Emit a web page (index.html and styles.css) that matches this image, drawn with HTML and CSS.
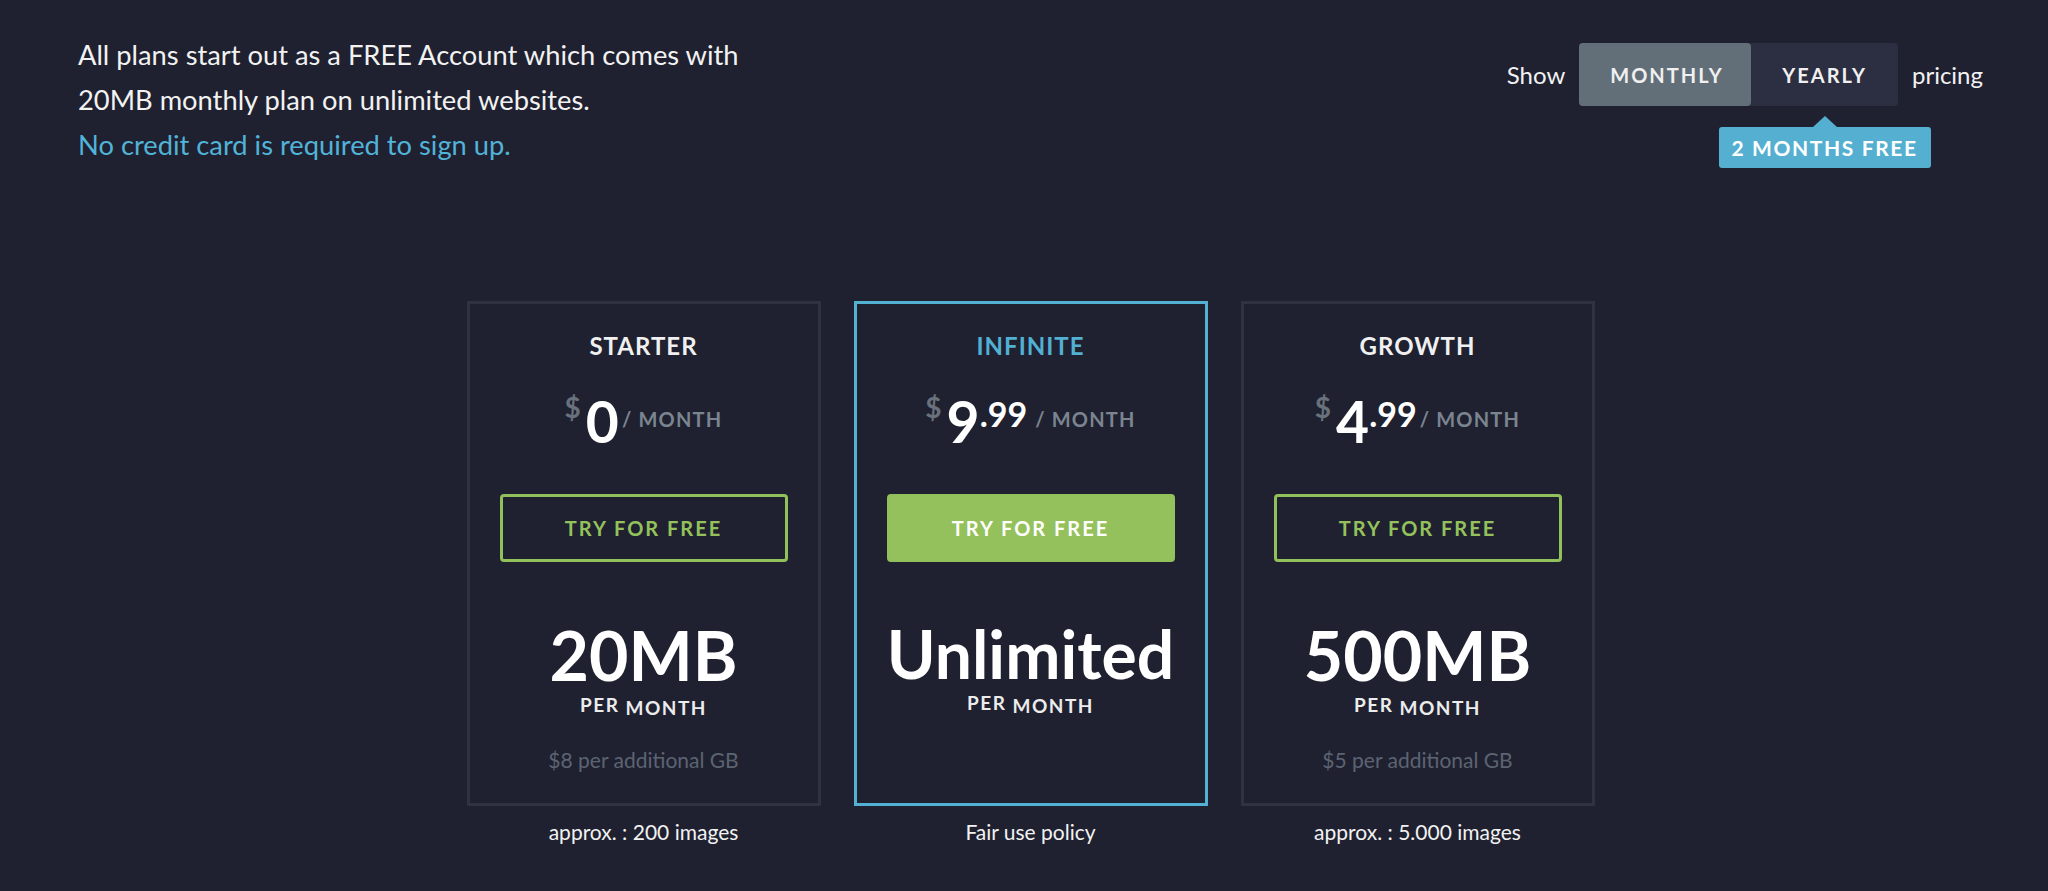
FILE: index.html
```html
<!DOCTYPE html>
<html lang="en">
<head>
  <meta charset="UTF-8">
  <title>Pricing</title>
  <link rel="stylesheet" href="styles.css">
</head>
<body>
  <header class="top">
    <div class="intro">
      <p>All plans start out as a FREE Account which comes with<br>20MB monthly plan on unlimited websites.</p>
      <p class="note">No credit card is required to sign up.</p>
    </div>
    <div class="period">
      <span>Show</span>
      <div class="toggle">
        <button class="opt active">MONTHLY</button>
        <button class="opt">YEARLY<span class="badge">2 MONTHS FREE</span></button>
      </div>
      <span>pricing</span>
    </div>
  </header>

  <section class="plans">
    <div class="plan">
      <div class="card">
        <h3 class="name">STARTER</h3>
        <div class="price"><span class="cur">$</span><span class="int">0</span><span class="per tight">/ MONTH</span></div>
        <a class="try">TRY FOR FREE</a>
        <div class="amount">20MB</div>
        <div class="permonth"><span class="p">PER</span> MONTH</div>
        <div class="extra">$8 per additional GB</div>
      </div>
      <div class="foot">approx. : 200 images</div>
    </div>

    <div class="plan">
      <div class="card featured">
        <h3 class="name">INFINITE</h3>
        <div class="price"><span class="cur">$</span><span class="int">9</span><span class="cents">.99</span><span class="per">/ MONTH</span></div>
        <a class="try">TRY FOR FREE</a>
        <div class="amount">Unlimited</div>
        <div class="permonth"><span class="p">PER</span> MONTH</div>
      </div>
      <div class="foot">Fair use policy</div>
    </div>

    <div class="plan">
      <div class="card">
        <h3 class="name">GROWTH</h3>
        <div class="price"><span class="cur">$</span><span class="int">4</span><span class="cents">.99</span><span class="per tight">/ MONTH</span></div>
        <a class="try">TRY FOR FREE</a>
        <div class="amount">500MB</div>
        <div class="permonth"><span class="p">PER</span> MONTH</div>
        <div class="extra">$5 per additional GB</div>
      </div>
      <div class="foot">approx. : 5.000 images</div>
    </div>
  </section>
</body>
</html>
```

FILE: styles.css
```css
body {
  margin: 0;
  background: #1f2130;
  color: #f2f2f2;
  font-family: Lato, "Liberation Sans", sans-serif;
}
.top {
  display: flex;
  justify-content: space-between;
  align-items: flex-start;
  padding: 32px 65px 0 78px;
}
.intro p {
  margin: 0;
  font-size: 27.3px;
  line-height: 45px;
}
.intro .note {
  color: #52b3d9;
}
.period {
  display: flex;
  align-items: center;
  gap: 14px;
  margin-top: 11px;
  font-size: 24px;
}
.toggle {
  display: flex;
  background: #2c2e41;
  border-radius: 4px;
}
.opt {
  position: relative;
  height: 63px;
  padding: 0 31px;
  border: none;
  border-radius: 4px;
  background: transparent;
  color: #f0f0f0;
  font-family: Lato, sans-serif;
  font-weight: 700;
  font-size: 20px;
  letter-spacing: 2px;
}
.opt.active {
  width: 172px;
  background: #636f78;
}
.badge {
  position: absolute;
  top: 84px;
  left: 50%;
  transform: translateX(-50%);
  padding: 8px 13px;
  background: #55afd0;
  border-radius: 3px;
  white-space: nowrap;
  font-size: 21px;
  letter-spacing: 1.6px;
  color: #fff;
}
.badge::before {
  content: "";
  position: absolute;
  top: -11px;
  left: 50%;
  margin-left: -12px;
  border: 12px solid transparent;
  border-top: 0;
  border-bottom: 11px solid #55afd0;
}
.plans {
  display: flex;
  justify-content: center;
  gap: 33px;
  margin-top: 134px;
  padding-left: 13px;
}
.plan {
  width: 354px;
}
.card {
  display: flex;
  flex-direction: column;
  align-items: center;
  box-sizing: border-box;
  height: 505px;
  padding: 27px 30px 0;
  border: 3px solid #2f3243;
}
.card.featured {
  border-color: #52b0d3;
}
.name {
  margin: 0;
  font-size: 24px;
  line-height: 30px;
  font-weight: 700;
  letter-spacing: 1px;
  color: #f0f0f0;
}
.featured .name {
  color: #52b0d3;
}
.price {
  display: flex;
  align-items: flex-start;
  margin-top: 32px;
  line-height: 1;
  font-weight: 700;
}
.cur {
  margin-top: 0;
  margin-right: 5px;
  font-size: 28px;
  color: #68717c;
}
.int {
  font-size: 57px;
  color: #fff;
}
.cents {
  margin-top: 4px;
  font-size: 34px;
  color: #fff;
}
.per {
  margin-top: 16px;
  margin-left: 8px;
  font-size: 20px;
  letter-spacing: 1.2px;
  color: #7b8590;
}
.per.tight {
  margin-left: 3px;
}
.try {
  display: flex;
  align-items: center;
  justify-content: center;
  box-sizing: border-box;
  width: 100%;
  height: 68px;
  margin-top: 44px;
  border: 3px solid #92c05a;
  border-radius: 4px;
  font-size: 20px;
  font-weight: 700;
  letter-spacing: 2px;
  color: #94c15b;
}
.featured .try {
  background: #94c15b;
  color: #fff;
}
.amount {
  margin-top: 59px;
  font-size: 68px;
  line-height: 1;
  font-weight: 700;
  color: #fff;
}
.featured .amount {
  font-size: 66px;
}
.permonth {
  margin-top: 9px;
  font-size: 19px;
  line-height: 1;
  font-weight: 700;
  letter-spacing: 1.5px;
  color: #ececec;
}
.permonth .p {
  position: relative;
  top: -3px;
}
.extra {
  margin-top: 30px;
  font-size: 21px;
  color: #5c6472;
}
.foot {
  margin-top: 13px;
  text-align: center;
  font-size: 21px;
  color: #f2f2f2;
}
```
